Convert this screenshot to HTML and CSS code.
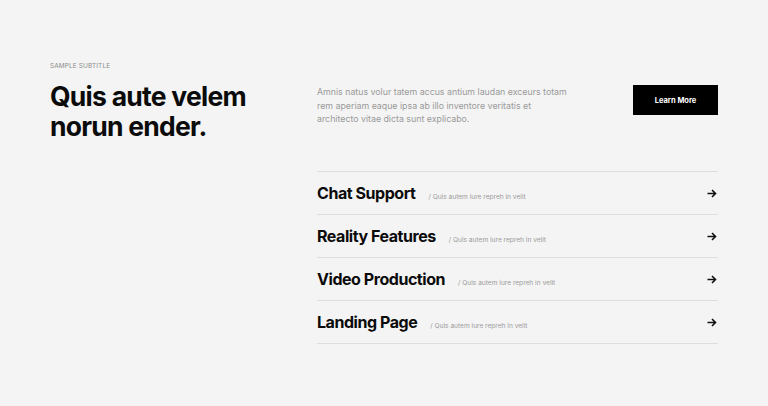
FILE: index.html
```html
<!DOCTYPE html>
<html lang="en">
<head>
<meta charset="utf-8">
<title>Services</title>
<link rel="stylesheet" href="styles.css">
</head>
<body>
<section class="section">
  <div class="intro">
    <div class="lead">
      <p class="eyebrow">SAMPLE SUBTITLE</p>
      <h1 class="headline">Quis aute velem norun ender.</h1>
    </div>
    <div class="side">
      <div class="side-top">
        <p class="desc">Amnis natus volur tatem accus antium laudan exceurs totam rem aperiam eaque ipsa ab illo inventore veritatis et architecto vitae dicta sunt explicabo.</p>
        <a class="btn" href="#">Learn More</a>
      </div>
      <ul class="list">
        <li class="item"><div class="item-main"><span class="item-title">Chat Support</span><span class="item-sub">/ Quis autem iure repreh in velit</span></div><svg class="arrow" viewBox="0 0 10 9" width="10" height="9"><path d="M0.5 4.5H8.5M5 1L8.5 4.5L5 8" fill="none" stroke="#111" stroke-width="1.6"/></svg></li>
        <li class="item"><div class="item-main"><span class="item-title">Reality Features</span><span class="item-sub">/ Quis autem iure repreh in velit</span></div><svg class="arrow" viewBox="0 0 10 9" width="10" height="9"><path d="M0.5 4.5H8.5M5 1L8.5 4.5L5 8" fill="none" stroke="#111" stroke-width="1.6"/></svg></li>
        <li class="item"><div class="item-main"><span class="item-title">Video Production</span><span class="item-sub">/ Quis autem iure repreh in velit</span></div><svg class="arrow" viewBox="0 0 10 9" width="10" height="9"><path d="M0.5 4.5H8.5M5 1L8.5 4.5L5 8" fill="none" stroke="#111" stroke-width="1.6"/></svg></li>
        <li class="item"><div class="item-main"><span class="item-title">Landing Page</span><span class="item-sub">/ Quis autem iure repreh in velit</span></div><svg class="arrow" viewBox="0 0 10 9" width="10" height="9"><path d="M0.5 4.5H8.5M5 1L8.5 4.5L5 8" fill="none" stroke="#111" stroke-width="1.6"/></svg></li>
      </ul>
    </div>
  </div>
</section>
</body>
</html>
```

FILE: styles.css
```css
* { box-sizing: border-box; }
html, body { margin: 0; padding: 0; }
body {
  background: #f4f4f4;
  font-family: Inter, "Noto Sans", "Liberation Sans", sans-serif;
  color: #111;
  width: 768px;
  height: 406px;
  overflow: hidden;
}
.section {
  padding: 62px 50px 0 50px;
}
.intro {
  display: flex;
}
.lead {
  width: 267px;
  flex: none;
}
.eyebrow {
  margin: 0;
  font-size: 6.5px;
  letter-spacing: 0.1px;
  color: #8c8c8c;
  line-height: 9px;
}
.headline {
  margin: 10px 0 0 0;
  font-size: 26.5px;
  font-weight: 700;
  letter-spacing: -0.75px;
  line-height: 30px;
  color: #0b0b0b;
  width: 210px;
}
.side {
  flex: 1;
  padding-top: 23px;
}
.side-top {
  display: flex;
  justify-content: space-between;
  align-items: flex-start;
}
.desc {
  margin: 0;
  width: 256px;
  font-size: 8.8px;
  line-height: 13.5px;
  color: #9a9a9a;
}
.btn {
  display: flex;
  align-items: center;
  justify-content: center;
  width: 85px;
  height: 30px;
  background: #000;
  color: #fff;
  font-size: 7.5px;
  font-weight: 700;
  text-decoration: none;
}
.list {
  list-style: none;
  margin: 45px 0 0 0;
  padding: 0;
  border-top: 1px solid #dedede;
}
.item {
  display: flex;
  align-items: center;
  height: 43px;
  border-bottom: 1px solid #dedede;
  padding-top: 1px;
}
.item-main {
  display: flex;
  align-items: baseline;
}
.item-title {
  font-size: 16px;
  font-weight: 700;
  letter-spacing: -0.45px;
  color: #0b0b0b;
}
.item-sub {
  margin-left: 13px;
  font-size: 6.6px;
  color: #9a9a9a;
}
.arrow {
  margin-left: auto;
  margin-right: 1px;
}
```
